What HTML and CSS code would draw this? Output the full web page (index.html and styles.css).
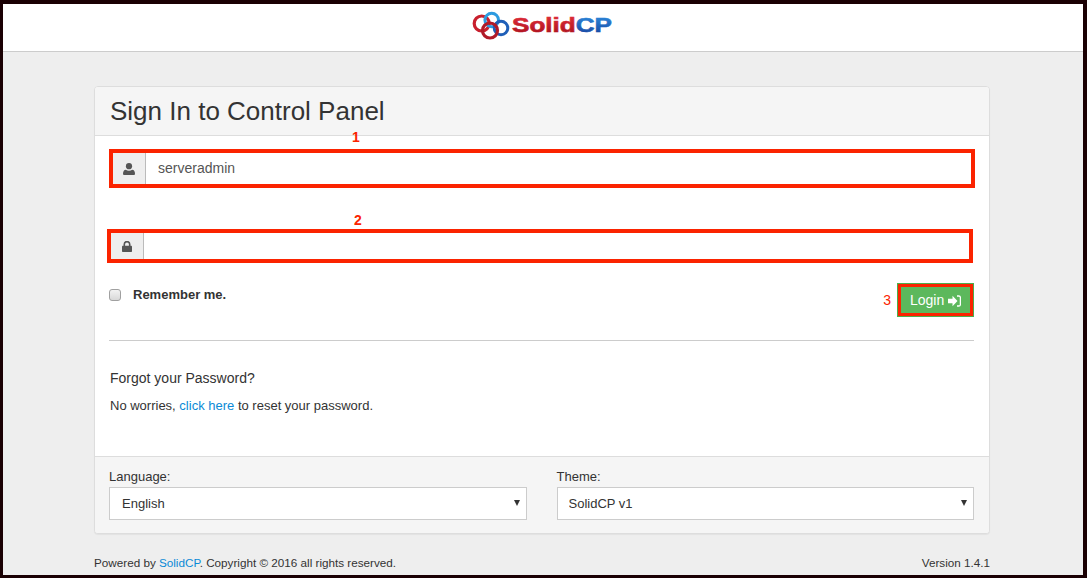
FILE: index.html
```html
<!DOCTYPE html>
<html lang="en">
<head>
<meta charset="utf-8">
<title>SolidCP</title>
<link rel="stylesheet" href="styles.css">
</head>
<body>
<div class="frame">
  <header class="topbar">
    <svg class="logo" width="142" height="31" viewBox="0 0 142 31" aria-label="SolidCP">
      <defs>
        <linearGradient id="red" x1="0" y1="0" x2="0" y2="1"><stop offset="0" stop-color="#e4303c"/><stop offset="1" stop-color="#a80f1c"/></linearGradient>
        <linearGradient id="blue" x1="0" y1="0" x2="0" y2="1"><stop offset="0" stop-color="#2f8fe0"/><stop offset="1" stop-color="#16409c"/></linearGradient>
      </defs>
      <circle cx="9.700" cy="12.500" r="7.500" fill="none" stroke="#c8202e" stroke-width="3.200"/>
      <circle cx="19.700" cy="9" r="6.800" fill="none" stroke="#2d9be0" stroke-width="3"/>
      <circle cx="29" cy="17" r="6.800" fill="none" stroke="#1f5fb8" stroke-width="3"/>
      <circle cx="18" cy="19.500" r="7.500" fill="none" stroke="#b01a28" stroke-width="3.200"/>
      <text class="logo-text" x="40" y="21" textLength="100" lengthAdjust="spacingAndGlyphs"><tspan fill="url(#red)" stroke="url(#red)">Solid</tspan><tspan fill="url(#blue)" stroke="url(#blue)">CP</tspan></text>
    </svg>
  </header>
  <main class="page">
    <section class="panel">
      <h1 class="panel-title">Sign In to Control Panel</h1>
      <div class="panel-body">
        <span class="mark mark-1">1</span>
        <div class="field field-user">
          <span class="addon"><svg width="12" height="12" viewBox="0 0 12 12"><circle cx="6" cy="3.200" r="3.100" fill="#555"/><path d="M1 12q-1 0-1-1.200 0-3.800 2.800-4.100 1.300 1 3.200 1t3.200-1q2.800 .3 2.800 4.100 0 1.200-1 1.200z" fill="#555"/></svg></span>
          <input class="text-input" type="text" value="serveradmin">
        </div>
        <span class="mark mark-2">2</span>
        <div class="field field-pass">
          <span class="addon"><svg width="10" height="11" viewBox="0 0 10 11"><rect x="0" y="4.800" width="10" height="6.200" rx=".7" fill="#555"/><path d="M2.300 5.200V3.300a2.700 2.700 0 0 1 5.400 0v1.900" fill="none" stroke="#555" stroke-width="1.600"/></svg></span>
          <input class="text-input" type="password">
        </div>
        <div class="login-row">
          <label class="remember"><input class="check" type="checkbox"><span>Remember me.</span></label>
          <div class="login-side">
            <span class="mark-3">3</span>
            <button class="login" type="button">Login <svg width="13" height="12" viewBox="0 0 13 12"><path d="M0 3.800h4.500V.8L9.500 6l-5 5.200v-3H0z" fill="#fff"/><path d="M9 1h1.800Q12.400 1 12.400 2.600v6.800Q12.400 11 10.800 11H9" fill="none" stroke="#fff" stroke-width="1.300"/></svg></button>
          </div>
        </div>
        <hr class="rule">
        <h2 class="forgot">Forgot your Password?</h2>
        <p class="hint">No worries, <a href="#">click here</a> to reset your password.</p>
      </div>
      <div class="panel-foot">
        <div class="pick">
          <label class="pick-label">Language:</label>
          <div class="select-wrap"><select class="select"><option>English</option></select></div>
        </div>
        <div class="pick">
          <label class="pick-label">Theme:</label>
          <div class="select-wrap"><select class="select"><option>SolidCP v1</option></select></div>
        </div>
      </div>
    </section>
    <footer class="credits">
      <span>Powered by <a href="#">SolidCP</a>. Copyright © 2016 all rights reserved.</span>
      <span>Version 1.4.1</span>
    </footer>
  </main>
</div>
</body>
</html>
```

FILE: styles.css
```css
* { box-sizing: border-box; }
html, body { margin: 0; padding: 0; height: 100%; }
body { font-family: "Liberation Sans", Arial, sans-serif; font-size: 14px; color: #333; }
a { color: #0b8ad6; text-decoration: none; }

.frame {
  height: 578px;
  overflow: hidden;
  background: #eee;
  border-style: solid;
  border-color: #1a0003;
  border-width: 4px 4px 3px 3px;
}
.topbar {
  height: 48px;
  background: #fff;
  border-bottom: 1px solid #ccc;
  display: flex;
  justify-content: center;
  align-items: flex-start;
  padding: 7px 0 0;
}
.logo-text { font-family: "Liberation Sans", Arial, sans-serif; font-weight: 700; font-size: 20px; stroke-width: .6px; }

.page { padding: 34px 93px 0 91px; }
.panel {
  background: #fff;
  border: 1px solid #ddd;
  border-radius: 4px;
  box-shadow: 0 1px 1px rgba(0,0,0,.05);
}
.panel-title {
  margin: 0;
  height: 49px;
  padding: 9px 15px 0;
  background: #f5f5f5;
  border-bottom: 1px solid #ddd;
  border-radius: 3px 3px 0 0;
  font-size: 26px;
  line-height: 30px;
  font-weight: 400;
  color: #333;
}
.panel-body { position: relative; padding: 13px 14px 0; height: 320px; }

.mark { position: absolute; font-family: "Liberation Sans", sans-serif; font-weight: 700; font-size: 14px; line-height: 16px; color: #fb2300; }
.mark-1 { left: 257px; top: -7px; }
.mark-2 { left: 259px; top: 76px; }

.field { display: flex; border: 4px solid #fb2300; background: #fff; }
.field-user { height: 39px; }
.field-pass { height: 34px; margin: 41px 2px 0 -2px; }
.addon {
  flex: none;
  width: 33px;
  display: flex;
  align-items: center;
  justify-content: center;
  background: #eee;
  border-right: 1px solid #bbb;
}
.text-input {
  flex: 1;
  min-width: 0;
  border: 0;
  padding: 0 12px 2px;
  background: #fff;
  font: 14px "Liberation Sans", Arial, sans-serif;
  color: #555;
}

.login-row { display: flex; justify-content: space-between; align-items: flex-start; margin: 20px 1px 0 0; }
.remember { display: flex; align-items: center; gap: 12px; margin-top: 4px; font-size: 13px; font-weight: 700; line-height: 15px; color: #333; }
.check {
  appearance: none;
  margin: 0;
  width: 12px;
  height: 12px;
  border: 1px solid #a0a0a0;
  border-radius: 3px;
  background: linear-gradient(#f2f2f2, #d8d8d8);
}
.login-side { display: flex; align-items: center; gap: 6px; }
.mark-3 { font-size: 14px; color: #fb2300; }
.login {
  width: 77px;
  height: 34px;
  padding: 0;
  background: #5cb85c;
  border: 1px solid #4cae4c;
  box-shadow: inset 0 0 0 3px #fb2300;
  color: #fff;
  font: 14px "Liberation Sans", Arial, sans-serif;
  white-space: nowrap;
}
.login svg { vertical-align: -2px; }

.rule { margin: 23px 1px 0 0; border: 0; border-top: 1px solid #ccc; }
.forgot { margin: 29px 0 0 1px; font-size: 14px; line-height: 16px; font-weight: 400; color: #333; }
.hint { margin: 12px 0 0 1px; font-size: 13px; line-height: 16px; color: #333; }

.panel-foot {
  display: flex;
  gap: 30px;
  height: 77px;
  padding: 12px 15px 0 14px;
  background: #f5f5f5;
  border-top: 1px solid #ddd;
  border-radius: 0 0 3px 3px;
}
.pick { flex: 1; }
.pick-label { display: block; font-size: 13px; line-height: 16px; margin-bottom: 2px; color: #333; }
.select-wrap { position: relative; }
.select-wrap::after {
  content: "";
  position: absolute;
  right: 7px;
  top: 13px;
  border-style: solid;
  border-width: 6px 3.500px 0;
  border-color: #333 transparent transparent;
}
.select {
  appearance: none;
  display: block;
  width: 100%;
  height: 33px;
  padding: 0 12px;
  background: #fff;
  border: 1px solid #ccc;
  border-radius: 0;
  font: 13px "Liberation Sans", Arial, sans-serif;
  color: #333;
}
.pick + .pick .select { padding-left: 11px; }
.credits { display: flex; justify-content: space-between; margin-top: 21px; font-size: 11.700px; line-height: 15px; color: #333; }
```
